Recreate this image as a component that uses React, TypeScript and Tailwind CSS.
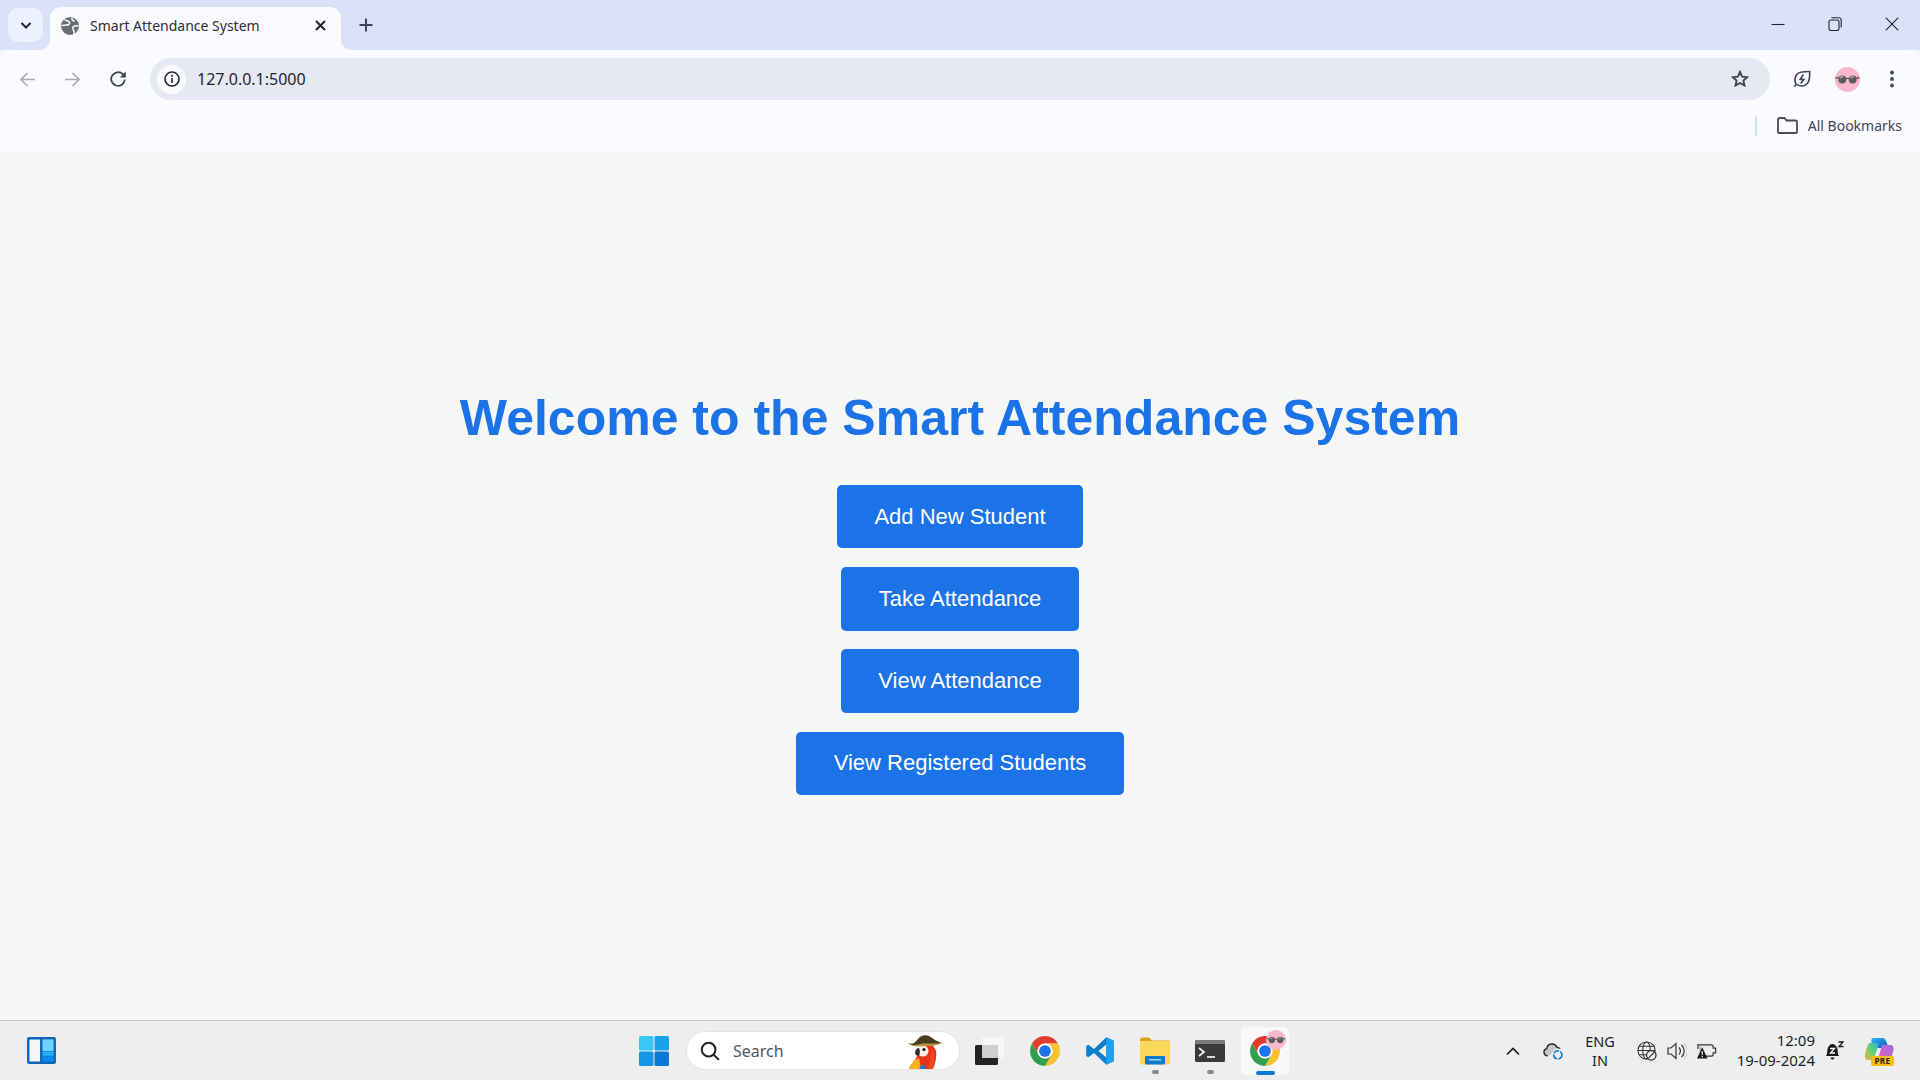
import React from "react";

const sans = "font-['Noto_Sans','Open_Sans',sans-serif]";

function Win({ kind }: { kind: string }) {
  return (
    <div className="w-[57px] h-[48px] flex items-center justify-center">
      <svg width="14" height="14" viewBox="0 0 14 14" fill="none" stroke="#1f2430" strokeWidth="1.1">
        {kind === "min" && <path d="M.5 7.500h13" />}
        {kind === "max" && (
          <>
            <rect x="1" y="3" width="10" height="10.500" rx="2" />
            <path d="M3.500 .8h7.500a2.200 2.200 0 0 1 2.200 2.200v7.500" />
          </>
        )}
        {kind === "close" && <path d="M.7 .7l12.600 12.600M13.300 .7L.7 13.300" />}
      </svg>
    </div>
  );
}

function Glasses({ size, bg = "#fbb6ce" }: { size: number; bg?: string }) {
  return (
    <svg width={size} height={size} viewBox="0 0 24 24">
      <circle cx="12" cy="12" r="12" fill={bg} />
      <circle cx="7" cy="12" r="3.800" fill="#5a5a5a" />
      <circle cx="17" cy="12" r="3.800" fill="#5a5a5a" />
      <path d="M5 11a2.500 2.500 0 0 1 3-1.500M15 11a2.500 2.500 0 0 1 3-1.500" stroke="#b5b5b5" strokeWidth="1.200" fill="none" />
      <path d="M.5 10.500h3M20.500 10.500h3M10.500 11h3" stroke="#444" strokeWidth="1.100" />
    </svg>
  );
}

function Chrome({ size }: { size: number }) {
  return (
    <svg width={size} height={size} viewBox="4 4 40 40">
      <path d="M24 4a20 20 0 0 1 17.320 10H24a10 10 0 0 0-8.660 15L6.680 14A20 20 0 0 1 24 4z" fill="#e33b2e" />
      <path d="M41.320 14A20 20 0 0 1 24 44l8.660-15A10 10 0 0 0 24 14z" fill="#fbc02d" />
      <path d="M24 44A20 20 0 0 1 6.680 14l8.660 15a10 10 0 0 0 17.320 0z" fill="#2f9e4f" />
      <circle cx="24" cy="24" r="10" fill="#fff" />
      <circle cx="24" cy="24" r="7.800" fill="#1a73e8" />
    </svg>
  );
}

function Button({ label, width }: { label: string; width: string }) {
  return (
    <button className={`${width} h-[63.4px] pb-[0.8px] bg-[#1c73e8] text-white text-[22px] rounded-[5px] font-['Liberation_Sans',sans-serif] flex items-center justify-center`}>
      {label}
    </button>
  );
}

function Dot() {
  return <div className="absolute left-[12px] top-[34px] w-[7px] h-[4px] rounded-full bg-[#8a8a8a]" />;
}

export default function App() {
  return (
    <div className="w-[1920px] h-[1080px] flex flex-col overflow-hidden bg-[#f5f7f7]">
      {/* tab strip */}
      <div className="h-[50px] bg-[#d9e2f9] flex items-start shrink-0">
        <div className="ml-[8px] mt-[8px] w-[35px] h-[34px] rounded-[10px] bg-[#edf1fd] flex items-center justify-center">
          <svg width="14" height="14" viewBox="0 0 14 14" fill="none" stroke="#1f2430" strokeWidth="2">
            <path d="M2.500 5l4.500 4.500L11.500 5" />
          </svg>
        </div>
        <div className="relative z-10 ml-[7px] mt-[7px] w-[291px] h-[43px] bg-[#fafaff] rounded-t-[11px] flex items-center pl-[11px] pr-[15px] pb-[6px]">
          <svg className="absolute left-[-10px] bottom-0" width="10" height="10" viewBox="0 0 10 10">
            <path d="M10 0v10H0a10 10 0 0 0 10-10z" fill="#fafaff" />
          </svg>
          <svg className="absolute right-[-10px] bottom-0" width="10" height="10" viewBox="0 0 10 10">
            <path d="M0 0v10h10A10 10 0 0 1 0 0z" fill="#fafaff" />
          </svg>
          <svg width="18" height="18" viewBox="0 0 18 18">
            <circle cx="9" cy="9" r="9" fill="#6a6e75" />
            <path d="M3.500 2.500c1.500 1.500 4.500 1 5 3s-1.500 2.500-3 2.500-3 .5-5 .5M11 .5c-.5 2 .5 3.500 2.500 3.500M17.500 9c-2-.5-4.500-.5-5.500 1s.5 3 1 4.500 0 2 0 3" stroke="#fafaff" strokeWidth="1.500" fill="none" />
          </svg>
          <span className={`ml-[11px] flex-1 text-[14px] text-[#2b2f38] ${sans}`}>Smart Attendance System</span>
          <svg width="11" height="11" viewBox="0 0 11 11" stroke="#1f2430" strokeWidth="2">
            <path d="M1 1l9 9M10 1l-9 9" />
          </svg>
        </div>
        <div className="ml-[18px] mt-[18px]">
          <svg width="14" height="14" viewBox="0 0 14 14" stroke="#3f4656" strokeWidth="2">
            <path d="M7 .5v13M.5 7h13" />
          </svg>
        </div>
        <div className="flex-1" />
        <Win kind="min" />
        <Win kind="max" />
        <Win kind="close" />
      </div>

      {/* toolbar */}
      <div className="h-[58px] bg-[#fafaff] flex items-center shrink-0 rounded-t-[10px]">
        <svg className="ml-[20px]" width="15" height="15" viewBox="0 0 15 15" fill="none" stroke="#a9acb3" strokeWidth="1.600">
          <path d="M15 7.500H1.500M7.500 1L1 7.500 7.500 14" />
        </svg>
        <svg className="ml-[30px]" width="15" height="15" viewBox="0 0 15 15" fill="none" stroke="#a9acb3" strokeWidth="1.600">
          <path d="M0 7.500h13.500M7.500 1L14 7.500 7.500 14" />
        </svg>
        <svg className="ml-[30px]" width="16" height="16" viewBox="0 0 16 16" fill="none" stroke="#3f4656" strokeWidth="1.800">
          <path d="M14.800 8.500a6.800 6.800 0 1 1-2-5.300L15 5.500" />
          <path d="M15.800 .6v6h-6z" fill="#3f4656" stroke="none" />
        </svg>
        <div className="ml-[24px] w-[1620px] h-[42px] bg-[#e6e9f3] rounded-full flex items-center pl-[7px] pr-[21px]">
          <div className="w-[29px] h-[29px] rounded-full bg-[#fafaff] flex items-center justify-center">
            <svg width="16" height="16" viewBox="0 0 16 16" fill="none" stroke="#1f2430" strokeWidth="1.600">
              <circle cx="8" cy="8" r="7" />
              <path d="M8 7v5M8 3.700v2" />
            </svg>
          </div>
          <span className={`ml-[11px] flex-1 text-[16px] text-[#1f2430] ${sans}`}>127.0.0.1:5000</span>
          <svg width="18" height="18" viewBox="0 0 20 20" fill="none" stroke="#3f4248" strokeWidth="2">
            <path d="M10 2l2.400 5.300 5.600.6-4.200 3.800 1.200 5.600L10 14.400l-5 2.900 1.200-5.600L2 7.900l5.600-.6z" />
          </svg>
        </div>
        <svg className="ml-[23px]" width="18" height="18" viewBox="0 0 20 20" fill="none" stroke="#3f4656" strokeWidth="1.800">
          <path d="M1.500 18.500l2-2.500C1 12 2 6 6 3.500c3.500-2 8-1.800 12.500-1.800 0 5 .5 10-2.500 13.300-3.500 3.500-8.500 3.300-12 1" />
          <path d="M11.500 5L8 10.500h4L8.500 15" />
        </svg>
        <div className="ml-[24px] flex"><Glasses size={25} /></div>
        <svg className="ml-[22px]" width="20" height="20" viewBox="0 0 20 20" fill="#3f4656">
          <circle cx="10" cy="3.500" r="1.900" />
          <circle cx="10" cy="10" r="1.900" />
          <circle cx="10" cy="16.500" r="1.900" />
        </svg>
      </div>

      {/* bookmarks bar */}
      <div className="h-[43px] bg-[#fafaff] flex items-center justify-end shrink-0 pr-[18px] pb-[8px]">
        <div className="w-[2px] h-[20px] bg-[#d3e0fb] mr-[20px]" />
        <svg width="21" height="17" viewBox="0 0 21 17" fill="none" stroke="#4a4d55" strokeWidth="1.800">
          <path d="M1 2.500A1.500 1.500 0 0 1 2.500 1h5l2 2.500h9A1.500 1.500 0 0 1 20 5v10a1 1 0 0 1-1 1H2a1 1 0 0 1-1-1z" />
        </svg>
        <span className={`ml-[10px] text-[14px] text-[#3f4656] ${sans}`}>All Bookmarks</span>
      </div>

      {/* page */}
      <main className="flex-1 flex flex-col items-center">
        <h1 className="mt-[238px] text-[50px] leading-[58px] font-bold text-[#1c73e8] font-['Liberation_Sans',sans-serif]">
          Welcome to the Smart Attendance System
        </h1>
        <div className="mt-[38px] flex flex-col items-center gap-[18.800px]">
          <Button label="Add New Student" width="w-[246px]" />
          <Button label="Take Attendance" width="w-[238px]" />
          <Button label="View Attendance" width="w-[238px]" />
          <Button label="View Registered Students" width="w-[328px]" />
        </div>
      </main>

      {/* taskbar */}
      <footer className="h-[60px] bg-[#eeeeee] border-t border-[#c4c4c4] flex items-center shrink-0">
        <svg className="ml-[27px]" width="29" height="27" viewBox="0 0 30 28">
          <rect width="30" height="28" rx="2" fill="#0f66b8" />
          <rect x="2.500" y="2.500" width="11" height="23" rx="1" fill="#f4f5f6" />
          <rect x="16" y="2.500" width="11.500" height="12" fill="#6cd4ff" />
          <rect x="16" y="15" width="11.500" height="4.500" fill="#29aeff" />
          <rect x="16" y="20" width="11.500" height="5.500" fill="#0a8df0" />
        </svg>

        <div className="ml-[583px] flex items-center">
          <svg width="30" height="30" viewBox="0 0 30 30">
            <rect x="0" y="0" width="14.500" height="14.500" rx="1.500" fill="#3cc6f5" />
            <rect x="15.500" y="0" width="14.500" height="14.500" rx="1.500" fill="#1aa1eb" />
            <rect x="0" y="15.500" width="14.500" height="14.500" rx="1.500" fill="#1595e3" />
            <rect x="15.500" y="15.500" width="14.500" height="14.500" rx="1.500" fill="#0a78d4" />
          </svg>
          <div className="ml-[17px] w-[274px] h-[39px] bg-white rounded-full border border-[#e3e3e3] flex items-center pl-[13px] overflow-hidden">
            <svg width="20" height="20" viewBox="0 0 22 22" fill="none" stroke="#222" strokeWidth="2.200">
              <circle cx="9.500" cy="9.500" r="7.500" />
              <path d="M14.800 14.800l6 6" />
            </svg>
            <span className={`ml-[13px] flex-1 text-[16px] text-[#555] ${sans}`}>Search</span>
            <svg className="mr-[16px] self-end" width="35" height="35" viewBox="0 0 35 35">
              <path d="M13 12c6-4 13-2 15 5 1 7-1 13-3 18H1c2-6 7-9 8-13z" fill="#e8321c" />
              <path d="M24 14c3 4 3 10 1 21h-6c3-5 4-13 5-21z" fill="#f04a1a" />
              <path d="M1 35c2-6 6-9 10-11l2 11z" fill="#f9b21a" />
              <path d="M11 35c1-2 3-4 5-5l2 5z" fill="#2f6fd0" />
              <ellipse cx="15" cy="17" rx="5.500" ry="5.500" fill="#f3efe6" />
              <circle cx="16" cy="15.500" r="1.600" fill="#111" />
              <path d="M11 14c-3 0-4.500 3-3.500 6.500 1 1.500 3 1.500 4 0 .5-2 .5-4.500-.5-6.500z" fill="#2a2a2a" />
              <path d="M0 9c4 2 7 0 10-4 2-3 7-5 11-3 4 2 6 5 13 7-7 3-11 2-15 2S6 14 0 9z" fill="#4a3d20" />
              <path d="M0 9c4 3 8 2 12 1s10 0 22-1c-6 3-11 3-16 3S5 14 0 9z" fill="#b7973a" />
            </svg>
          </div>
          <svg className="ml-[15px]" width="30" height="28" viewBox="0 0 30 28">
            <rect x="7" y="0" width="22" height="21" rx="1.500" fill="#f7f7f7" />
            <rect x="0" y="8" width="23" height="20" rx="1.500" fill="#232323" />
            <rect x="7" y="8" width="16" height="13" fill="#cfcfcf" />
          </svg>
          <div className="ml-[25px] flex"><Chrome size={30} /></div>
          <svg className="ml-[25px]" width="30" height="30" viewBox="0 0 100 100">
            <path fillRule="evenodd" d="M96 16L71 4 30 43 11 29 4 33v34l7 4 19-14 41 39 25-12zM71 28L45 50l26 22z" fill="#0e7fcb" />
            <path d="M71 4l25 12v68L71 96z" fill="#1fa0f0" />
          </svg>
          <div className="ml-[25px] relative flex">
            <svg width="30" height="30" viewBox="0 0 30 30">
              <path d="M0 3.500a2 2 0 0 1 2-2h7l3 3h17a1 1 0 0 1 1 1V9H0z" fill="#dca214" />
              <rect x="0" y="5" width="30" height="23.500" rx="1" fill="#fbd75b" />
              <rect x="5" y="20" width="20" height="8.500" rx="1" fill="#0f7cc9" />
              <rect x="9" y="23" width="12" height="1.500" fill="#9ed5f7" />
            </svg>
            <Dot />
          </div>
          <div className="ml-[25px] relative flex">
            <svg width="30" height="30" viewBox="0 0 30 30">
              <rect x="0" y="4" width="30" height="22" rx="1.500" fill="#3a3a3a" />
              <path d="M0 5.500A1.500 1.500 0 0 1 1.500 4H28.500A1.500 1.500 0 0 1 30 5.500V8H0z" fill="#7a7a7a" />
              <path d="M4 12l5 4-5 4" stroke="#f2f2f2" strokeWidth="1.700" fill="none" />
              <path d="M12 21h8" stroke="#f2f2f2" strokeWidth="1.700" />
            </svg>
            <Dot />
          </div>
          <div className="ml-[16px] w-[48px] h-[48px] bg-[#f8f8f8] rounded-[4px] relative flex items-center justify-center">
            <Chrome size={30} />
            <div className="absolute right-[3px] top-[3px] flex"><Glasses size={20} bg="#f5b9cb" /></div>
            <div className="absolute left-[15px] bottom-0 w-[19px] h-[4px] rounded-full bg-[#0a78d4]" />
          </div>
        </div>

        <div className="flex-1" />

        <svg width="16" height="16" viewBox="0 0 16 16" fill="none" stroke="#1f1f1f" strokeWidth="1.700">
          <path d="M2 11.500l6-6 6 6" />
        </svg>
        <svg className="ml-[22px]" width="21" height="20" viewBox="0 0 22 20">
          <path d="M5 15a3.800 3.800 0 0 1-1-7.500 5.500 5.500 0 0 1 10.500-1.500 4 4 0 0 1 3.500 3" fill="#c9c9c9" stroke="#2c2c2c" strokeWidth="1.500" />
          <circle cx="15.500" cy="14" r="6.500" fill="#eee" />
          <circle cx="15.500" cy="14" r="4.300" fill="none" stroke="#0a78d4" strokeWidth="1.700" strokeDasharray="6 1.500" />
        </svg>
        <div className={`ml-[19px] w-[34px] text-center text-[14.500px] leading-[19px] text-[#1f1f1f] ${sans}`}>
          ENG
          <br />
          IN
        </div>
        <svg className="ml-[20px]" width="20" height="20" viewBox="0 0 21 21" fill="none" stroke="#333" strokeWidth="1.100">
          <circle cx="10" cy="10" r="9" />
          <ellipse cx="10" cy="10" rx="4" ry="9" />
          <path d="M1 10h18M2 5.500h16M2 14.500h16" />
          <circle cx="15" cy="15" r="5" fill="#eee" strokeWidth="1.300" />
          <path d="M12 18l6-6" strokeWidth="1.300" />
        </svg>
        <svg className="ml-[10px]" width="20" height="18" viewBox="0 0 20 18" fill="none" stroke="#333" strokeWidth="1.200">
          <path d="M1 6h3l5-4.500v15L4 12H1z" />
          <path d="M12 5.500a5 5 0 0 1 0 7M14.500 3a8 8 0 0 1 0 12" />
          <path d="M17 1.500a10 10 0 0 1 0 15" stroke="#c8c8c8" />
        </svg>
        <svg className="ml-[10px]" width="20" height="19" viewBox="0 0 21 19">
          <path d="M1 8V3.500h14a2 2 0 0 1 2 2V7h2.500v5H17v1.500a2 2 0 0 1-2 2H9" fill="none" stroke="#333" strokeWidth="1.300" />
          <path d="M2 4l6 6-5 5z" fill="#bbb" />
          <path d="M5.500 6L11 18H0z" fill="#1a1a1a" />
          <path d="M5.500 10v4M5.500 15v1.500" stroke="#fff" strokeWidth="1.200" />
        </svg>
        <div className={`ml-[19px] w-[79px] pb-[2px] text-right text-[15px] leading-[20px] text-[#1f1f1f] whitespace-nowrap ${sans}`}>
          12:09
          <br />
          19-09-2024
        </div>
        <svg className="ml-[11px]" width="18" height="20" viewBox="0 0 18 20">
          <path d="M0 15c1.500-2 1-4 1.500-7s3-5 5-5 4.500 2 5 5 0 5 1.500 7z" fill="#1a1a1a" />
          <path d="M4.500 16.500h4a2 2 0 0 1-4 0z" fill="#1a1a1a" />
          <path d="M4 7.500h4.500l-4 4.500h4.500" stroke="#fff" strokeWidth="1.300" fill="none" />
          <path d="M12.500 1h4.500l-4 4.500h4.500" stroke="#1a1a1a" strokeWidth="1.300" fill="none" />
        </svg>
        <div className="ml-[21px] mr-[26px] relative w-[29px] h-[30px]">
          <svg width="29" height="30" viewBox="0 0 29 30">
            <defs>
              <linearGradient id="cpA" x1="0" y1="0" x2="1" y2="1">
                <stop offset="0" stopColor="#2fb6ef" />
                <stop offset="1" stopColor="#1057c6" />
              </linearGradient>
              <linearGradient id="cpB" x1="0" y1="1" x2="1" y2="0">
                <stop offset="0" stopColor="#f2b52c" />
                <stop offset="0.500" stopColor="#6ed274" />
                <stop offset="1" stopColor="#27b0d8" />
              </linearGradient>
              <linearGradient id="cpC" x1="0" y1="1" x2="1" y2="0">
                <stop offset="0" stopColor="#ee5fb0" />
                <stop offset="1" stopColor="#9b6de8" />
              </linearGradient>
            </defs>
            <path d="M9 2h8c2.500 0 3.500 1.500 4.500 4l2 6H10L6.500 6C5.500 4 7 2 9 2z" fill="url(#cpA)" />
            <path d="M5 7h7c1.500 0 1.500 2 1 3.500L9.500 21c-1 2-2.500 3-4.500 3H3c-2.500 0-3.500-2-3-4.500C.5 15 3 7 5 7z" fill="url(#cpB)" />
            <path d="M17 9h8c3 0 4 2 3.500 5l-1.500 6c-.5 2-2.500 3-5 3h-9z" fill="url(#cpC)" />
          </svg>
          <div className={`absolute left-[6px] bottom-0 w-[23px] h-[10px] bg-[#f7bd12] rounded-[2px] flex items-center justify-center text-[8px] font-bold leading-none tracking-[0.5px] text-[#222] ${sans}`}>
            PRE
          </div>
        </div>
      </footer>
    </div>
  );
}
